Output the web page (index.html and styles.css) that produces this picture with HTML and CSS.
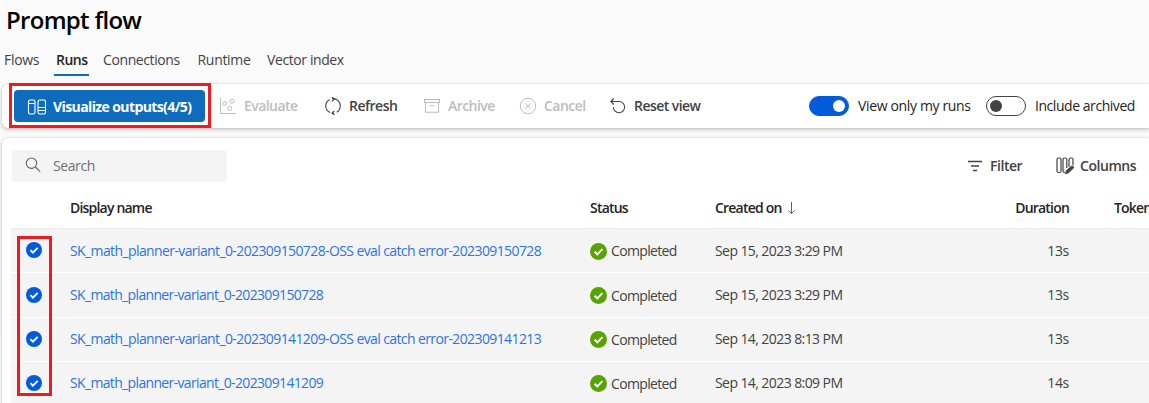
FILE: index.html
```html
<!DOCTYPE html>
<html lang="en">
<head>
<meta charset="utf-8">
<title>Prompt flow</title>
<link rel="stylesheet" href="styles.css">
</head>
<body>
<svg class="defs" width="0" height="0" aria-hidden="true">
  <symbol id="check" viewBox="0 0 16 16"><circle cx="8" cy="8" r="8"/><path d="M4.4 8.2l2.5 2.5 4.8-4.9" fill="none" stroke="#fff" stroke-width="1.9"/></symbol>
</svg>
<header class="page-head">
  <h1><span class="t-title">Prompt flow</span></h1>
  <nav class="tabs">
    <a class="tab t-flows">Flows</a>
    <a class="tab active t-runs">Runs</a>
    <a class="tab t-conn">Connections</a>
    <a class="tab t-runtime">Runtime</a>
    <a class="tab t-vector">Vector index</a>
  </nav>
</header>

<section class="card toolbar">
  <button class="primary">
    <svg width="20" height="16" viewBox="0 0 20 16" fill="none" stroke="#fff" stroke-width="1.1"><rect x="1.500" y="1" width="6.500" height="14" rx="1.700"/><path d="M1.500 4.500H8M11 8.500h7.500M11 11.500h7.500"/><path d="M11 8.500V2.700Q11 1 12.700 1h4.100q1.700 0 1.700 1.700V8.500M11 8.500v4.800q0 1.700 1.700 1.700h4.100q1.700 0 1.700-1.700v-4.800"/></svg>
    <span class="t-vis">Visualize outputs(4/5)</span>
  </button>
  <div class="action off a-eval">
    <svg width="18" height="18" viewBox="0 0 18 18" fill="none" stroke="currentColor"><path d="M1.500 1v15.500H17"/><circle cx="5.700" cy="6.500" r="1.900"/><circle cx="13" cy="4.200" r="2.100"/><circle cx="10.700" cy="11.500" r="2.100"/></svg>
    <span class="t-eval">Evaluate</span>
  </div>
  <div class="action a-refresh">
    <svg width="18" height="18" viewBox="0 0 18 18" fill="none" stroke="currentColor" stroke-width="1.100"><path d="M5.500 2.700A7.200 7.200 0 0 0 6 15.600M8 1.700a7.300 7.300 0 0 1 8.300 7.300 7.300 7.300 0 0 1-3.500 6.200M10 16.300H8"/><path d="M8 0l2.500 2L8 4.300M10.500 13.800L8 16l2.500 2"/></svg>
    <span class="t-refresh">Refresh</span>
  </div>
  <div class="action off a-archive">
    <svg width="18" height="18" viewBox="0 0 18 18" fill="none" stroke="currentColor" stroke-width="1.100"><path d="M1.500 2.500h15v3h-15zM2.500 5.500v9.800h13V5.500M6.500 8.800h5"/></svg>
    <span class="t-archive">Archive</span>
  </div>
  <div class="action off a-cancel">
    <svg width="18" height="18" viewBox="0 0 18 18" fill="none" stroke="currentColor"><circle cx="9" cy="9" r="7.700"/><path d="M6.300 6.300l5.400 5.400M11.700 6.300l-5.400 5.400"/></svg>
    <span class="t-cancel">Cancel</span>
  </div>
  <div class="action a-reset">
    <svg width="18" height="18" viewBox="0 0 18 18" fill="none" stroke="currentColor" stroke-width="1.100"><path d="M1.800 4.500H10a5.600 5.600 0 1 1-5.600 5.700M4.800 1.500l-3 3 3 3"/></svg>
    <span class="t-reset">Reset view</span>
  </div>
  <div class="toggles">
    <i class="toggle on"></i><span class="toggle-label t-mine">View only my runs</span>
    <i class="toggle"></i><span class="toggle-label t-incl">Include archived</span>
  </div>
  <div class="mark mark-button"></div>
</section>

<section class="card runs">
  <div class="list-tools">
    <div class="search">
      <svg width="16" height="16" viewBox="0 0 16 16" fill="none" stroke="#616161" stroke-width="1.100"><circle cx="6.500" cy="6.200" r="5.200"/><path d="M10.300 10l4.900 4.600"/></svg>
      <span class="t-search">Search</span>
    </div>
    <div class="tool tool-filter">
      <svg width="16" height="16" viewBox="0 0 16 16" stroke="currentColor" stroke-width="1.300"><path d="M1 3.500h14M4 8h8M6 12.500h4"/></svg>
      <span class="t-filter">Filter</span>
    </div>
    <div class="tool tool-columns">
      <svg width="20" height="18" viewBox="0 0 20 18" fill="none" stroke="currentColor" stroke-width="1.200"><rect x="1" y="1" width="4" height="14.500" rx="1.500"/><path d="M10.800 11V2.500Q10.800 1 9.300 1H8.500Q7 1 7 2.500v11.500q0 1.500 1.500 1.500h.5M17 8V2.500Q17 1 15.500 1h-1q-1.500 0-1.500 1.500V10"/><path d="M9.300 17l1-3.500 5.900-5 1.900 2-5.700 5.500z" fill="currentColor" stroke-width=".6"/></svg>
      <span class="t-columns">Columns</span>
    </div>
  </div>
  <div class="row head">
    <div class="c-check"></div>
    <div class="c-name"><span class="t-hname">Display name</span></div>
    <div class="c-status"><span class="t-hstatus">Status</span></div>
    <div class="c-date"><span class="t-hcreated">Created on</span><svg width="10" height="14" viewBox="0 0 10 14" fill="none" stroke="#616161"><path d="M4.500 1v11.500M1.500 9.500l3 3 3-3"/></svg></div>
    <div class="c-dur"><span class="t-hdur">Duration</span></div>
    <div class="c-token"><span class="t-htoken">Token</span></div>
  </div>
  <div class="row">
    <div class="c-check"><svg class="sel"><use href="#check"/></svg></div>
    <div class="c-name"><a class="t-long">SK_math_planner-variant_0-202309150728-OSS eval catch error-202309150728</a></div>
    <div class="c-status"><svg class="ok"><use href="#check"/></svg><span class="t-comp">Completed</span></div>
    <div class="c-date"><span class="t-date">Sep 15, 2023 3:29 PM</span></div>
    <div class="c-dur"><span class="t-dur">13s</span></div>
  </div>
  <div class="row">
    <div class="c-check"><svg class="sel"><use href="#check"/></svg></div>
    <div class="c-name"><a class="t-short">SK_math_planner-variant_0-202309150728</a></div>
    <div class="c-status"><svg class="ok"><use href="#check"/></svg><span class="t-comp">Completed</span></div>
    <div class="c-date"><span class="t-date">Sep 15, 2023 3:29 PM</span></div>
    <div class="c-dur"><span class="t-dur">13s</span></div>
  </div>
  <div class="row">
    <div class="c-check"><svg class="sel"><use href="#check"/></svg></div>
    <div class="c-name"><a class="t-long">SK_math_planner-variant_0-202309141209-OSS eval catch error-202309141213</a></div>
    <div class="c-status"><svg class="ok"><use href="#check"/></svg><span class="t-comp">Completed</span></div>
    <div class="c-date"><span class="t-date">Sep 14, 2023 8:13 PM</span></div>
    <div class="c-dur"><span class="t-dur">13s</span></div>
  </div>
  <div class="row">
    <div class="c-check"><svg class="sel"><use href="#check"/></svg></div>
    <div class="c-name"><a class="t-short">SK_math_planner-variant_0-202309141209</a></div>
    <div class="c-status"><svg class="ok"><use href="#check"/></svg><span class="t-comp">Completed</span></div>
    <div class="c-date"><span class="t-date">Sep 14, 2023 8:09 PM</span></div>
    <div class="c-dur"><span class="t-dur">14s</span></div>
  </div>
  <div class="mark mark-checks"></div>
</section>
</body>
</html>
```
FILE: styles.css
```css
* { box-sizing: border-box; }
html, body { margin: 0; height: 403px; overflow: hidden; }
body {
  background: linear-gradient(#fafafa 337px, #fff 337px);
  font: 14px/20px "Segoe UI", "Open Sans", "Noto Sans", sans-serif;
  color: #424242;
  letter-spacing: -0.3px;
  white-space: nowrap;
}
svg { flex: none; display: block; }
.defs { position: absolute; }
.page-head { height: 84px; padding: 4px 0 0 6px; }
h1 { margin: 0; font-size: 24px; line-height: 32px; font-weight: 550; color: #000; letter-spacing: -0.7px; }
.tabs { display: flex; margin: 14px 0 0 -2px; }
.tab { height: 26px; }
.tab.active { font-weight: 600; color: #242424; border-bottom: 2px solid #0f6cbd; }
.t-flows { width: 50px; }
.t-runs { width: 35px; padding-left: 2px; margin-right: 14px; letter-spacing: -0.5px; }
.t-conn { width: 94.500px; letter-spacing: -0.4px; }
.t-runtime { width: 69.500px; }
.t-vector { letter-spacing: -0.4px; }

.card { position: relative; margin-left: 2px; background: #fff; border-radius: 6px 0 0 6px; box-shadow: 0 0 2px rgba(0,0,0,.2), 0 2px 4px rgba(0,0,0,.18); }
.toolbar { height: 44px; display: flex; align-items: center; padding-left: 12px; margin-bottom: 10px; }
.primary { width: 191px; height: 32px; border: 0; border-radius: 4px; background: #0f6cbd; color: #fff; font: inherit; font-weight: 700; display: flex; align-items: center; gap: 6px; padding: 2px 0 0 13px; letter-spacing: -0.6px; }
.action { display: flex; align-items: center; gap: 7px; font-weight: 600; letter-spacing: -0.55px; }
.off { color: #bdbdbd; }
.a-eval { margin-left: 14px; width: 105px; }
.a-refresh { width: 99px; letter-spacing: -0.5px; }
.a-archive { width: 96px; }
.a-cancel { width: 90px; }
.a-reset { width: 200px; }
.toggles { display: flex; align-items: center; color: #242424; }
.toggle { width: 40px; height: 20px; border: 1px solid #424242; border-radius: 10px; margin-right: 9px; display: flex; align-items: center; padding: 0 3px; }
.toggle::before { content: ""; width: 12px; height: 12px; border-radius: 50%; background: #424242; }
.toggle.on { background: #015cda; border-color: #015cda; justify-content: flex-end; }
.toggle.on::before { background: #fff; }
.t-mine { width: 128px; letter-spacing: -0.35px; }
.t-incl { letter-spacing: -0.45px; }
.mark { position: absolute; border: 3px solid #ed1c24; }
.mark-button { left: 7px; top: -1px; width: 202px; height: 45px; }
.mark-checks { left: 15px; top: 98px; width: 35px; height: 160px; }

.runs { height: 280px; }
.list-tools { display: flex; height: 50px; padding: 12px 0 0 10px; }
.search { width: 215px; height: 32px; border-radius: 4px; background: #f4f4f4; display: flex; align-items: center; gap: 12px; padding-left: 13px; color: #707070; margin-right: 740px; letter-spacing: -0.4px; }
.search svg { margin-top: -3px; }
.tool { height: 32px; display: flex; align-items: center; gap: 7px; font-weight: 600; letter-spacing: -0.45px; }
.tool-filter { width: 89px; }
.tool-columns { gap: 4px; }
.row { height: 44.200px; margin-left: 9px; background: #f4f4f4; border-bottom: 1px solid #fff; display: flex; align-items: center; overflow: hidden; }
.row > div { flex-shrink: 0; }
.c-check { width: 59px; padding-left: 15px; }
.c-name { width: 520px; color: #2b74dc; }
.c-status { width: 125px; display: flex; align-items: center; gap: 4px; }
.c-date { width: 240px; display: flex; gap: 5px; align-items: center; letter-spacing: -0.58px; }
.c-dur { width: 114px; text-align: right; }
.c-token { margin-left: 45px; }
.t-long { letter-spacing: -0.605px; }
.t-short { letter-spacing: -0.655px; }
.t-comp { letter-spacing: -0.65px; padding-top: 1px; }
.head { height: 41.300px; background: none; border-bottom: 1px solid #ececec; font-weight: 600; }
.head > div { color: #242424; letter-spacing: -0.8px; }
.sel { width: 16px; height: 16px; fill: #015cda; margin-top: -1px; }
.ok { width: 17px; height: 17px; fill: #57a300; margin-top: 1px; }
```
